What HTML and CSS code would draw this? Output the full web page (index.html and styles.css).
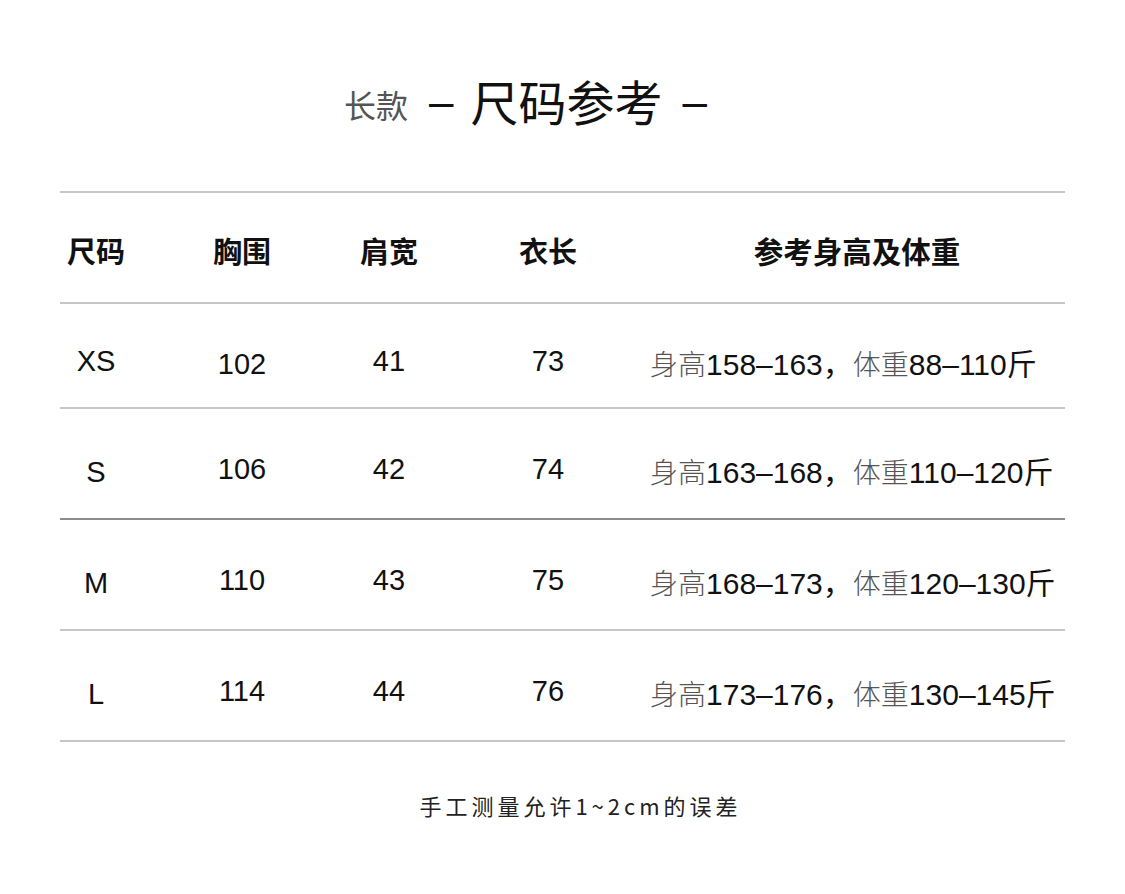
FILE: index.html
```html
<!DOCTYPE html>
<html lang="zh">
<head>
<meta charset="utf-8">
<link rel="stylesheet" href="styles.css">
</head>
<body>
<div class="page">
  <div class="title">
    <span class="sub">长款</span>
    <span class="dash">–</span>
    <span class="main">尺码参考</span>
    <span class="dash">–</span>
  </div>
  <div class="table">
    <div class="row head">
      <div class="c1">尺码</div>
      <div class="c2">胸围</div>
      <div class="c3">肩宽</div>
      <div class="c4">衣长</div>
      <div class="c5 hc">参考身高及体重</div>
    </div>
    <div class="row r-short">
      <div class="c1">XS</div>
      <div class="c2 low">102</div>
      <div class="c3">41</div>
      <div class="c4">73</div>
      <div class="c5"><span class="lt">身高</span>158–163，<span class="lt">体重</span>88–110斤</div>
    </div>
    <div class="row">
      <div class="c1 low">S</div>
      <div class="c2">106</div>
      <div class="c3">42</div>
      <div class="c4">74</div>
      <div class="c5"><span class="lt">身高</span>163–168，<span class="lt">体重</span>110–120斤</div>
    </div>
    <div class="row dark">
      <div class="c1 low">M</div>
      <div class="c2">110</div>
      <div class="c3">43</div>
      <div class="c4">75</div>
      <div class="c5"><span class="lt">身高</span>168–173，<span class="lt">体重</span>120–130斤</div>
    </div>
    <div class="row last">
      <div class="c1 low">L</div>
      <div class="c2">114</div>
      <div class="c3">44</div>
      <div class="c4">76</div>
      <div class="c5"><span class="lt">身高</span>173–176，<span class="lt">体重</span>130–145斤</div>
    </div>
  </div>
  <div class="note">手工测量允许1~2cm的误差</div>
</div>
</body>
</html>
```
FILE: styles.css
```css
html, body {
  margin: 0;
  padding: 0;
  background: #fff;
}
body {
  width: 1125px;
  height: 894px;
  overflow: hidden;
  font-family: "Liberation Sans", "Noto Sans CJK SC", sans-serif;
  color: #111;
}
.page {
  padding: 0 60px;
}
.title {
  height: 191px;
  display: flex;
  align-items: flex-start;
  padding-left: 284px;
  padding-top: 20px;
  box-sizing: border-box;
  font-family: "Noto Sans CJK SC", sans-serif;
}
.title .sub {
  font-size: 32px;
  color: #555;
  line-height: 48px;
  margin-top: 60px;
}
.title .dash {
  font-family: "Liberation Sans", sans-serif;
  font-size: 44px;
  line-height: 48px;
  margin-top: 58px;
  color: #111;
  margin-left: 21px;
  margin-right: 17px;
}
.title .main {
  font-size: 48px;
  line-height: 48px;
  margin-top: 56px;
  color: #111;
  margin-right: -1px;
}
.table {
  width: 1005px;
}
.row {
  display: grid;
  grid-template-columns: 72px 220px 74px 244px 1fr;
  align-items: center;
  height: 111px;
  box-sizing: border-box;
  border-top: 2px solid #c6c6c6;
  padding-top: 12px;
  font-size: 29px;
}
.row > div {
  text-align: center;
  white-space: nowrap;
}
.row.r-short {
  height: 105px;
}
.row.dark {
  border-top-color: #8c8c8c;
}
.row.last {
  border-bottom: 2px solid #c6c6c6;
  height: 113px;
}
.row.head {
  font-family: "Noto Sans CJK SC", sans-serif;
  font-weight: 700;
  font-size: 29px;
  padding-top: 5px;
}
.row .low {
  padding-top: 5px;
}
.row .c5 {
  text-align: left;
  margin-left: -20px;
  font-size: 30px;
  font-family: "Liberation Sans", "Noto Sans CJK SC", sans-serif;
}
.row .c5.hc {
  text-align: center;
  margin-left: 0;
  padding-right: 21px;
  font-size: 29.5px;
  font-family: "Noto Sans CJK SC", sans-serif;
}
.lt {
  font-family: "Noto Sans CJK SC", sans-serif;
  font-weight: 300;
  color: #555;
  font-size: 28px;
}
.note {
  text-align: center;
  font-family: "Noto Sans CJK SC", sans-serif;
  font-size: 22px;
  letter-spacing: 4px;
  color: #222;
  padding-top: 47px;
  padding-left: 36px;
}
```
